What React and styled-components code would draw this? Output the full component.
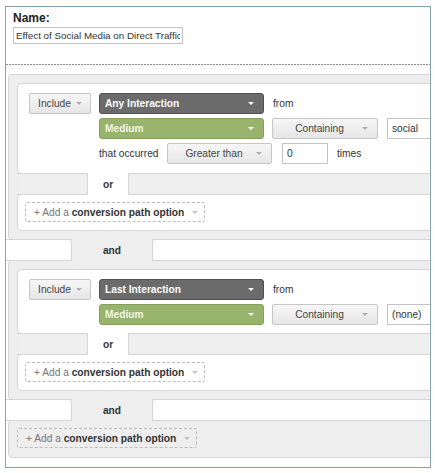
import styled, { createGlobalStyle } from "styled-components";

const GlobalStyle = createGlobalStyle`
  * { box-sizing: border-box; }
  body {
    margin: 0;
    background: #ffffff;
    font-family: "Liberation Sans", Arial, sans-serif;
    font-size: 10.2px;
    color: #333333;
  }
`;

const LINE = "#d6d6d6";
const PANEL = "#eeeeee";

const Frame = styled.div`
  margin: 6px 0 0 5px;
  width: 426px;
  height: 462px;
  border: 1px solid #86a3b1;
  overflow: hidden;
  background: #ffffff;
`;

const NameSection = styled.div`
  padding: 4px 0 0 7px;
`;

const NameLabel = styled.label`
  display: block;
  font-size: 12px;
  font-weight: bold;
  line-height: 15px;
  color: #222222;
  margin-bottom: 1px;
`;

const TextInput = styled.input`
  display: block;
  width: ${({ $w }) => $w}px;
  height: ${({ $h = 21 }) => $h}px;
  padding: 0 ${({ $px = 4 }) => $px}px;
  border: 1px solid #c4c4c4;
  background: #ffffff;
  font: inherit;
  font-size: ${({ $fs = 10.2 }) => $fs}px;
  color: #333333;
  outline: none;
  flex-shrink: 0;
`;

const Divider = styled.div`
  height: 1px;
  margin: 20px 0 9px;
  background: repeating-linear-gradient(to right, #8c8c8c 0 2px, transparent 2px 3px);
`;

const Group = styled.div`
  margin-left: 2px;
  width: 470px;
  background: ${PANEL};
  border: 1px solid ${LINE};
  border-radius: 4px;
  padding: ${({ $pad = "8px" }) => $pad};
`;

const Card = styled.div`
  background: #ffffff;
  border: 1px solid ${LINE};
  border-radius: 4px;
  padding: ${({ $pad = "9px 11px" }) => $pad};
`;

const RuleCard = styled(Card)`
  display: flex;
  align-items: flex-start;
`;

const Rows = styled.div`
  display: flex;
  flex-direction: column;
  gap: 4px;
`;

const Row = styled.div`
  display: flex;
  align-items: center;
  height: 21px;
`;

const Caret = styled.span`
  flex-shrink: 0;
  width: 0;
  height: 0;
  border-left: ${({ $s = 3 }) => $s}px solid transparent;
  border-right: ${({ $s = 3 }) => $s}px solid transparent;
  border-top: ${({ $s = 3 }) => $s}px solid ${({ $c = "#b0b0b0" }) => $c};
`;

const Button = styled.div`
  flex-shrink: 0;
  display: flex;
  align-items: center;
  width: ${({ $w }) => $w}px;
  height: 21px;
  margin-left: ${({ $ml = 0 }) => $ml}px;
  margin-right: ${({ $mr = 0 }) => $mr}px;
  padding: ${({ $centered }) => ($centered ? "0 9px 0 9px" : "0")};
  justify-content: center;
  gap: 5px;
  border: 1px solid #c6c6c6;
  border-radius: 2px;
  background: linear-gradient(#f7f7f7, #e6e6e6);
  color: #444444;

  span.label {
    flex: ${({ $centered }) => ($centered ? 1 : "none")};
    text-align: center;
  }
`;

const Select = styled.div`
  flex-shrink: 0;
  display: flex;
  align-items: center;
  justify-content: space-between;
  width: 165px;
  height: 21px;
  padding: 0 9px 0 5px;
  border-radius: 3px;
  border: 1px solid ${({ $tone }) => ($tone === "green" ? "#84a05c" : "#4f4f4f")};
  background: ${({ $tone }) => ($tone === "green" ? "#98b46c" : "#6b6b6b")};
  color: ${({ $tone }) => ($tone === "green" ? "#f1f6e6" : "#ffffff")};
  font-weight: bold;
`;

const Text = styled.span`
  flex-shrink: 0;
  width: ${({ $w }) => ($w ? `${$w}px` : "auto")};
  margin-left: ${({ $ml = 0 }) => $ml}px;
  color: #333333;
`;

const TabRow = styled.div`
  position: relative;
  z-index: 1;
  display: flex;
  height: 22px;
  margin: -1px 0;
`;

const Gap = styled.div`
  flex: ${({ $w }) => ($w ? `0 0 ${$w}px` : "1")};
  background: ${({ $bg }) => $bg};
  border: 1px solid ${LINE};
  ${({ $side }) => ($side === "left" ? "border-left: none;" : "border-right: none;")}
  border-radius: ${({ $side }) => ($side === "left" ? "0 3px 3px 0" : "3px 0 0 3px")};
`;

const TabLabel = styled.div`
  flex: 0 0 ${({ $w }) => $w}px;
  display: flex;
  align-items: center;
  justify-content: center;
  background: ${({ $bg }) => $bg};
  font-weight: bold;
  color: #333333;
`;

const AddOption = styled.div`
  display: inline-flex;
  vertical-align: top;
  align-items: center;
  gap: 8px;
  height: 20px;
  padding: 0 6px 0 8px;
  border: 1px dashed #bdbdbd;
  border-radius: 2px;
  color: #777777;
  white-space: pre;

  b {
    color: #333333;
  }
`;

const AddCard = styled(Card)`
  display: flex;
  padding: 7px 7px 8px;
`;

const LastGroup = styled(Group)`
  display: flex;
`;

const AddButton = () => (
  <AddOption>
    <span>
      + Add a <b>conversion path option</b>
    </span>
    <Caret $c="#c4c4c4" />
  </AddOption>
);

const DropButton = ({ label, w, centered, ml, mr }) => (
  <Button $w={w} $centered={centered} $ml={ml} $mr={mr}>
    <span className="label">{label}</span>
    <Caret />
  </Button>
);

const OrRow = () => (
  <TabRow>
    <Gap $w={71} $side="left" $bg="#efefef" />
    <TabLabel $w={40} $bg="#ffffff">or</TabLabel>
    <Gap $side="right" $bg="#efefef" />
  </TabRow>
);

const AndRow = () => (
  <TabRow>
    <Gap $w={66} $side="left" $bg="#ffffff" />
    <TabLabel $w={80} $bg={PANEL}>and</TabLabel>
    <Gap $side="right" $bg="#ffffff" />
  </TabRow>
);

const Rule = ({ interaction, value, occurred, pad }) => (
  <RuleCard $pad={pad}>
    <DropButton label="Include" w={62} mr={8} />
    <Rows>
      <Row>
        <Select>
          {interaction}
          <Caret $s={3.5} $c="#ffffff" />
        </Select>
        <Text $ml={9}>from</Text>
      </Row>
      <Row>
        <Select $tone="green">
          Medium
          <Caret $s={3.5} $c="#ffffff" />
        </Select>
        <DropButton label="Containing" w={106} centered ml={8} mr={9} />
        <TextInput $w={60} readOnly value={value} />
      </Row>
      {occurred && (
        <Row>
          <Text $w={68}>that occurred</Text>
          <DropButton label="Greater than" w={105} centered mr={10} />
          <TextInput $w={46} readOnly value="0" />
          <Text $ml={9}>times</Text>
        </Row>
      )}
    </Rows>
  </RuleCard>
);

export default function App() {
  return (
    <>
      <GlobalStyle />
      <Frame>
        <NameSection>
          <NameLabel>Name:</NameLabel>
          <TextInput
            $w={170}
            $h={17}
            $px={2}
            $fs={9.8}
            readOnly
            value="Effect of Social Media on Direct Traffic"
          />
        </NameSection>
        <Divider />

        <Group>
          <Rule interaction="Any Interaction" value="social" occurred />
          <OrRow />
          <AddCard>
            <AddButton />
          </AddCard>
        </Group>

        <AndRow />

        <Group>
          <Rule interaction="Last Interaction" value="(none)" pad="9px 11px 8px" />
          <OrRow />
          <AddCard>
            <AddButton />
          </AddCard>
        </Group>

        <AndRow />

        <LastGroup $pad="7px 8px 9px">
          <AddButton />
        </LastGroup>
      </Frame>
    </>
  );
}
